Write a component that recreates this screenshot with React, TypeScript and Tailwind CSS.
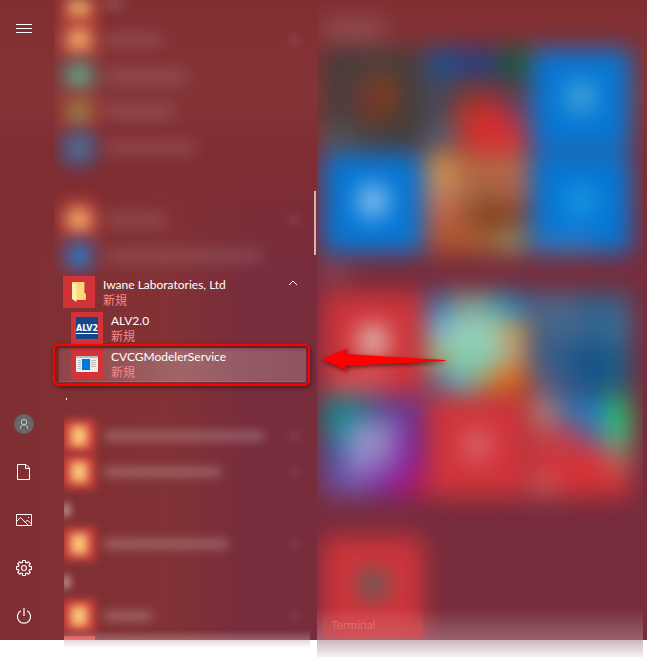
import type { ReactNode } from "react";

const plainRed = "bg-[#d0343a]";
const plainBlue = "bg-[#0577d5]";

/* A tile is either one colour with a soft centre, or a 4x4 mosaic of colours. */
type Tile = { name: string; fill: string; centre?: string; foot?: string; cells?: string[] };

const createTiles: Tile[] = [
  {
    name: "Tile 1",
    fill: "bg-[#443f3e]",
    cells: [
      "bg-[#443c3b]", "bg-[#443f3e]", "bg-[#443f3e]", "bg-[#443f3e]",
      "bg-[#443f3e]", "bg-[#643c33]", "bg-[#843c1c]", "bg-[#403f3e]",
      "bg-[#443f3e]", "bg-[#643632]", "bg-[#743a22]", "bg-[#403f3e]",
      "bg-[#51595e]", "bg-[#484848]", "bg-[#3e4040]", "bg-[#403f40]",
    ],
  },
  {
    name: "Tile 2",
    fill: "bg-[#3f4f62]",
    cells: [
      "bg-[#145498]", "bg-[#20408c]", "bg-[#244080]", "bg-[#086030]",
      "bg-[#3b4c60]", "bg-[#643c40]", "bg-[#683840]", "bg-[#50404c]",
      "bg-[#404c5a]", "bg-[#b03428]", "bg-[#d02c28]", "bg-[#7c3c60]",
      "bg-[#46647c]", "bg-[#b83c38]", "bg-[#e82c30]", "bg-[#d83438]",
    ],
  },
  { name: "Tile 3", fill: plainBlue, centre: "bg-[#50acd8]" },
  { name: "Tile 4", fill: plainBlue, centre: "bg-[#a0d0f4]" },
  {
    name: "Tile 5",
    fill: "bg-[#a85c3c]",
    cells: [
      "bg-[#cc9c50]", "bg-[#bc6c44]", "bg-[#bc6440]", "bg-[#b86c50]",
      "bg-[#c88c68]", "bg-[#ac6c4c]", "bg-[#a0603c]", "bg-[#b06850]",
      "bg-[#c4684c]", "bg-[#a05434]", "bg-[#7c3c18]", "bg-[#84442c]",
      "bg-[#b45434]", "bg-[#ac5830]", "bg-[#a0683c]", "bg-[#8c8c68]",
    ],
  },
  { name: "Tile 6", fill: plainBlue, centre: "bg-[#1c9ce0]", foot: "bg-[#4080c4]" },
];

const playTiles: Tile[] = [
  { name: "Tile 7", fill: plainRed, centre: "bg-[#e4d4c8]", foot: "bg-[#d46c70]" },
  {
    name: "Tile 8",
    fill: "bg-[#80bcb0]",
    cells: [
      "bg-[#3c7cb0]", "bg-[#8ca090]", "bg-[#60a4a8]", "bg-[#1c84c0]",
      "bg-[#80b8d8]", "bg-[#94d0bc]", "bg-[#a0ccb0]", "bg-[#c49c58]",
      "bg-[#a8b874]", "bg-[#84d0b0]", "bg-[#84ccb8]", "bg-[#c49c70]",
      "bg-[#6c749c]", "bg-[#6cb8b8]", "bg-[#c08840]", "bg-[#e4640c]",
    ],
  },
  {
    name: "Tile 9",
    fill: "bg-[#2c5c88]",
    cells: [
      "bg-[#48688c]", "bg-[#48688c]", "bg-[#2c628c]", "bg-[#38648c]",
      "bg-[#486488]", "bg-[#44668c]", "bg-[#30628c]", "bg-[#3c7098]",
      "bg-[#3c5c84]", "bg-[#245888]", "bg-[#145088]", "bg-[#205c88]",
      "bg-[#606080]", "bg-[#2c5c8c]", "bg-[#14548c]", "bg-[#206480]",
    ],
  },
  {
    name: "Tile 10",
    fill: "bg-[#6c58a0]",
    cells: [
      "bg-[#0c8c8c]", "bg-[#2c7890]", "bg-[#604498]", "bg-[#6c3898]",
      "bg-[#2c7c98]", "bg-[#8c98c8]", "bg-[#9888c0]", "bg-[#742898]",
      "bg-[#5454a8]", "bg-[#988cc8]", "bg-[#8c68b8]", "bg-[#88209c]",
      "bg-[#6c4c9c]", "bg-[#7850ac]", "bg-[#80289c]", "bg-[#b01474]",
    ],
  },
  { name: "Tile 11", fill: plainRed, centre: "bg-[#dc6870]" },
  {
    name: "Tile 12",
    fill: plainRed,
    cells: [
      "bg-[#b4847c]", "bg-[#3474b4]", "bg-[#1480c4]", "bg-[#28c068]",
      "bg-[#c04c4c]", "bg-[#b04458]", "bg-[#6068a0]", "bg-[#40c080]",
      "bg-[#cf3338]", "bg-[#d43338]", "bg-[#dc3034]", "bg-[#b46c60]",
      "bg-[#cf5458]", "bg-[#d03338]", "bg-[#d03338]", "bg-[#cf3338]",
    ],
  },
];

const extraTiles: Tile[] = [{ name: "Terminal", fill: plainRed, centre: "bg-[#50645c]" }];

function TileButton({ tile }: { tile: Tile }) {
  return (
    <button aria-label={tile.name} className={`relative block size-[100px] ${tile.fill}`}>
      {tile.cells && (
        <span className="grid size-full grid-cols-4 grid-rows-4">
          {tile.cells.map((cell, i) => (
            <span key={i} className={cell} />
          ))}
        </span>
      )}
      {tile.centre && <span className={`absolute top-8 left-9 h-8 w-7 rounded-full ${tile.centre}`} />}
      {tile.foot && <span className={`absolute bottom-1 left-2 h-3 w-14 ${tile.foot}`} />}
    </button>
  );
}

function TileGroup({ tiles, title }: { tiles: Tile[]; title: string }) {
  return (
    <section>
      <div className="flex h-10 items-center">
        <span className={`h-4 rounded-full bg-white/20 ${title}`} />
      </div>
      <div className="grid grid-cols-[repeat(3,100px)] gap-1">
        {tiles.map((tile) => (
          <TileButton key={tile.name} tile={tile} />
        ))}
      </div>
    </section>
  );
}

function NavButton({ label, children, className = "h-12" }: { label: string; children: ReactNode; className?: string }) {
  return (
    <button aria-label={label} className={`flex w-12 items-center justify-center text-white ${className}`}>
      {children}
    </button>
  );
}

function gearPath() {
  const teeth = 8;
  const points: string[] = [];
  for (let i = 0; i < teeth; i++) {
    const mid = (i * 2 * Math.PI) / teeth;
    for (const [offset, radius] of [[-0.25, 5.8], [-0.19, 7.6], [0.19, 7.6], [0.25, 5.8]]) {
      const a = mid + offset;
      points.push(`${(8 + radius * Math.cos(a)).toFixed(2)} ${(8 + radius * Math.sin(a)).toFixed(2)}`);
    }
  }
  return `M${points.join("L")}Z`;
}

function Chevron({ className = "" }: { className?: string }) {
  return (
    <svg width="10" height="6" viewBox="0 0 10 6" fill="none" stroke="currentColor" className={className}>
      <path d="M1 5L5 1L9 5" />
    </svg>
  );
}

/* Out-of-focus rows of the app list */
type SoftRow = { icon?: string; core?: string; text?: string; chevron?: boolean };

const folder = { icon: "bg-[#d8403c]", core: "bg-[#f8cc78]", chevron: true };

const upperRows: SoftRow[] = [
  { ...folder, text: "w-[60px]" },
  { icon: "bg-[#646460]", core: "bg-[#6cac90]", text: "w-[84px]" },
  { icon: "bg-[#c84434]", core: "bg-[#7c8c4c]", text: "w-[72px]" },
  { icon: "bg-[#2c5ca4]", core: "bg-[#647080]", text: "w-[94px]" },
  {},
  { ...folder, text: "w-[64px]" },
  { icon: "bg-[#6c4470]", core: "bg-[#1c84d0]", text: "w-[160px]" },
];

const lowerRows: SoftRow[] = [
  { ...folder, text: "w-[162px]" },
  { ...folder, text: "w-[120px]" },
  {},
  { ...folder, text: "w-[126px]" },
  {},
  { ...folder, text: "w-[50px]" },
];

function SoftListRow({ row, sharp }: { row: SoftRow; sharp?: boolean }) {
  if (!row.icon) {
    return (
      <div className="flex h-9 items-center">
        {sharp && <span className="h-3 w-1.5 rounded-full bg-white/80 blur-[4px]" />}
      </div>
    );
  }
  return (
    <div className="flex h-9 items-start">
      <span className={`flex size-8 shrink-0 items-center justify-center ${row.icon} ${sharp ? "blur-[5px]" : "blur-[9px]"}`}>
        <span className={sharp ? `h-5 w-4 ${row.core}` : `size-5 ${row.core}`} />
      </span>
      <span className={`mt-2.5 ml-2 h-3 rounded-full ${row.text} ${sharp ? "bg-white/20 blur-[5px]" : "bg-white/15 blur-[8px]"}`} />
      {row.chevron && <span className="mt-3 mr-3 ml-auto size-2 rounded-full bg-white/15 blur-[4px]" />}
    </div>
  );
}

function AppText({ name }: { name: string }) {
  return (
    <span className="flex flex-col pt-px text-left text-xs leading-4">
      <span className="whitespace-nowrap text-white">{name}</span>
      <span className="font-['Noto_Sans_CJK_JP',sans-serif] leading-[14px] text-[#f08c92]">新規</span>
    </span>
  );
}

export default function App() {
  return (
    <div className="bg-white font-['Lato','Noto_Sans_CJK_JP',sans-serif]">
      <main className="relative flex overflow-hidden bg-[linear-gradient(to_bottom,#812e31_0%,#853436_15%,#802d32_24%,#7f2c3100_42%),linear-gradient(to_right,#7f2e32_0%,#823234_26%,#782c3c_38%,#772c3c_100%)]">
        <nav className="flex w-12 shrink-0 flex-col">
          <NavButton label="Menu" className="h-14">
            <svg width="16" height="9" viewBox="0 0 16 9" stroke="currentColor">
              <path d="M0 .5H16M0 4.5H16M0 8.5H16" />
            </svg>
          </NavButton>
          <div className="mt-auto flex flex-col">
            <NavButton label="Account">
              <span className="flex size-5 items-center justify-center rounded-full bg-[#676767] text-[#c8c8c8]">
                <svg width="10" height="12" viewBox="0 0 10 12" fill="none" stroke="currentColor">
                  <circle cx="5" cy="4" r="2.7" />
                  <path d="M1.2 10.8C1.2 8.4 2.7 6.8 5 6.8S8.8 8.4 8.8 10.8" />
                </svg>
              </span>
            </NavButton>
            <NavButton label="Documents">
              <svg width="14" height="16" viewBox="0 0 14 16" fill="none" stroke="currentColor">
                <path d="M.5 .5H9L12.500 4V15.500H.5ZM8.500 .5V4.500H12.500" />
              </svg>
            </NavButton>
            <NavButton label="Pictures">
              <svg width="16" height="12" viewBox="0 0 16 12" fill="none" stroke="currentColor">
                <path d="M.5 .5H15.500V11.500H.5ZM.5 7.500L4.500 3.500L12 11M9 8.500L11.500 6L15.500 10" />
                <path d="M12 3.500H13" />
              </svg>
            </NavButton>
            <NavButton label="Settings">
              <svg width="16" height="16" viewBox="0 0 16 16" fill="none" stroke="currentColor" strokeWidth="1.1" strokeLinejoin="round">
                <path d={gearPath()} />
                <circle cx="8" cy="8" r="2.5" />
              </svg>
            </NavButton>
            <NavButton label="Power">
              <svg width="16" height="18" viewBox="0 0 16 18" fill="none" stroke="currentColor" strokeWidth="1.2">
                <path d="M4.800 3.800A6.600 6.600 0 1 0 11.200 3.800M8 1V9" />
              </svg>
            </NavButton>
          </div>
        </nav>

        <section className="relative flex w-[269px] shrink-0 flex-col">
          <div className="mr-[7px] ml-[6px] overflow-hidden pl-[9px]">
            <div className="flex h-6 items-start">
              <span className="flex h-5 w-8 justify-center bg-[#d8403c] blur-[8px]">
                <span className="h-4 w-5 bg-[#f8cc78]" />
              </span>
              <span className="ml-2 h-2 w-5 bg-white/20 blur-[6px]" />
            </div>
            {upperRows.map((row, i) => (
              <SoftListRow key={i} row={row} />
            ))}
          </div>

          <button className="mr-[19px] ml-[15px] flex h-9 items-start gap-2">
            <span className="flex size-8 shrink-0 items-center justify-center bg-[#d13438]">
              <svg width="16" height="22" viewBox="0 0 16 22">
                <path d="M1 1H13.500V12L15 13V19H5Z" fill="#efc25c" />
                <path d="M3 1H13V12L14.500 13.200V18.500H5Z" fill="#fbd978" />
                <path d="M1 1L5.500 4V21L1 18Z" fill="#ffeeb0" />
              </svg>
            </span>
            <AppText name="Iwane Laboratories, Ltd" />
            <Chevron className="mt-1 ml-auto text-white" />
          </button>

          <button className="ml-[23px] flex h-9 items-start gap-2">
            <span className="flex size-8 shrink-0 items-center justify-center bg-[#d13438]">
              <span className="flex size-[22px] flex-col items-center justify-center bg-[#15458a] text-white">
                <span className="border-b border-white pt-0.5 font-['DejaVu_Sans',sans-serif] text-[8px] leading-[9px] font-bold">ALV2</span>
              </span>
            </span>
            <AppText name="ALV2.0" />
          </button>

          <div className="relative h-9">
            <button className="ml-[11px] flex h-[34px] w-[247px] items-start gap-2 border-r-2 border-b border-white/10 bg-linear-to-r from-white/10 via-white/25 to-white/18 pl-3">
              <span className="flex size-8 shrink-0 items-center justify-center bg-[#d13438]">
                <svg width="22" height="16" viewBox="0 0 22 16">
                  <path d="M0 0H22V16H0Z" fill="#ededed" />
                  <path d="M0 0H22V2H0Z" fill="#b8bcc0" />
                  <path d="M2 4.500H5M2 6.500H5M2 8.500H5M2 10.500H5M2 12.500H5M15 4.500H20M15 6.500H20M15 8.500H20M15 10.500H20" stroke="#bcbcbc" />
                  <path d="M6 3H14V14H6Z" fill="#0078d7" />
                </svg>
              </span>
              <AppText name="CVCGModelerService" />
            </button>
            <span className="pointer-events-none absolute -top-1 left-[5px] h-[42px] w-[257px] rounded-md border-2 border-[#ff0000] shadow-[1px_2px_4px_#00000066,inset_1px_2px_4px_#00000055]" />
          </div>

          <div className="flex h-4 items-end">
            <span className="ml-[18px] h-0.5 w-px bg-white" />
          </div>

          <div className="mr-[7px] ml-4 overflow-hidden">
            <div className="-ml-px pt-5">
              {lowerRows.map((row, i) => (
                <SoftListRow key={i} row={row} sharp />
              ))}
              <div className="h-1 w-8 bg-[#d8484c]" />
            </div>
          </div>
          <div className="absolute right-[7px] bottom-0 left-4 h-2.5 bg-linear-to-b from-white/0 to-white/25" />
          <span className="absolute top-[191px] right-px h-16 w-0.5 bg-[#d8b4b8]" />
        </section>

        <section className="relative mr-1 flex-1 overflow-hidden pt-[9px] pl-1.5">
          <div className="blur-[12px]">
            <TileGroup tiles={createTiles} title="w-16" />
            <TileGroup tiles={playTiles} title="w-6" />
            <TileGroup tiles={extraTiles} title="w-0" />
          </div>
          <div className="absolute inset-x-0 bottom-0 h-8 bg-linear-to-b from-white/0 to-white/25 pl-1.5">
            <div className="flex h-[29px] w-[100px] items-end bg-linear-to-b from-[#e0484c00] to-[#e0484c99] pb-1 pl-2 text-xs text-white/20">
              Terminal
            </div>
          </div>
        </section>
        <svg width="126" height="30" viewBox="0 0 126 30" className="absolute top-[345px] left-[321px] drop-shadow-[1px_2px_2px_#00000088]">
          <path d="M1 14L27 3L24 9L124 15V16L24 21L27 26Z" fill="#ff0000" />
        </svg>
      </main>

      <footer className="flex h-[22px] items-start">
        <div className="ml-16 h-2 w-[246px] shrink-0 bg-linear-to-b from-[#e4d6d9] to-white" />
        <div className="mr-1 ml-[7px] h-[17px] flex-1 bg-linear-to-b from-[#cbb8bd] to-[#f6f1f3]" />
      </footer>
    </div>
  );
}
